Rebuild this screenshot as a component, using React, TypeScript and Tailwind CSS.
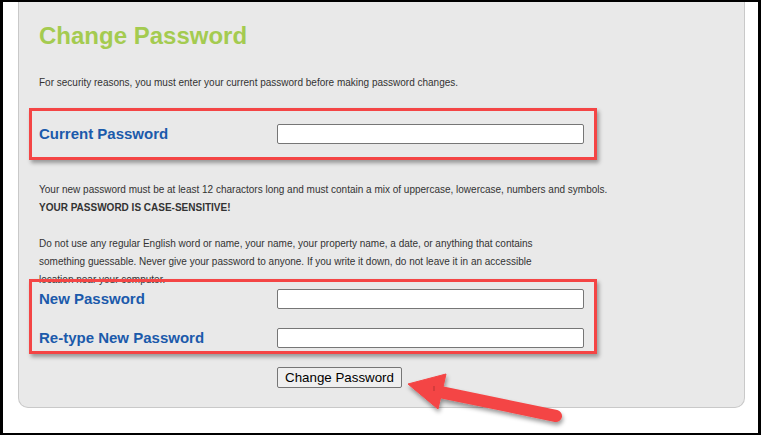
export default function App() {
  return (
    <div className="relative w-[761px] h-[435px] bg-black px-[3px] py-[2px] font-['Liberation_Sans',Arial,sans-serif]">
      <div className="h-full bg-white">
        <div className="ml-[15px] w-[727px] h-[406px] bg-[#e9e9e9] border border-t-0 border-[#c9c9c9] rounded-b-[10px] pl-[20px] pt-[20px]">
          <h1 className="text-[24px] leading-[28px] font-bold text-[#a4cb50]">Change Password</h1>

          <p className="mt-[24px] text-[10px] leading-[18px] text-[#333]">
            For security reasons, you must enter your current password before making password changes.
          </p>

          <div className="mt-[32px] flex items-center h-[20px]">
            <label className="w-[238px] text-[15px] leading-[20px] font-bold text-[#1b5aab]">Current Password</label>
            <input type="password" className="w-[307px] h-[20px] bg-white border border-[#767676] rounded-[2px]" />
          </div>

          <p className="mt-[37px] text-[10px] leading-[18px] text-[#333]">
            Your new password must be at least 12 charactors long and must contain a mix of uppercase, lowercase, numbers and symbols.
            <br />
            <b>YOUR PASSWORD IS CASE-SENSITIVE!</b>
          </p>

          <p className="mt-[18px] text-[10px] leading-[18px] text-[#333]">
            Do not use any regular English word or name, your name, your property name, a date, or anything that contains
            <br />
            something guessable. Never give your password to anyone. If you write it down, do not leave it in an accessible
            <br />
            location near your computer.
          </p>

          <div className="flex items-center h-[20px]">
            <label className="w-[238px] text-[15px] leading-[20px] font-bold text-[#1b5aab]">New Password</label>
            <input type="password" className="w-[307px] h-[20px] bg-white border border-[#767676] rounded-[2px]" />
          </div>

          <div className="mt-[19px] flex items-center h-[20px]">
            <label className="w-[238px] text-[15px] leading-[20px] font-bold text-[#1b5aab]">Re-type New Password</label>
            <input type="password" className="w-[307px] h-[20px] bg-white border border-[#767676] rounded-[2px]" />
          </div>

          <button className="block mt-[19px] ml-[238px] h-[21px] w-[125px] bg-[#efefef] border border-[#767676] rounded-[2px] text-[13.33px] leading-[19px] text-black">
            Change Password
          </button>
        </div>
      </div>

      {/* annotation highlights */}
      <div className="absolute left-[29px] top-[108px] w-[568px] h-[52px] border-[3px] border-[#f44545] shadow-[2px_3px_4px_rgba(0,0,0,0.35)]" />
      <div className="absolute left-[29px] top-[279px] w-[568px] h-[75px] border-[3px] border-[#f44545] shadow-[2px_3px_4px_rgba(0,0,0,0.35)]" />

      <svg className="absolute inset-0 pointer-events-none" width="761" height="435" viewBox="0 0 761 435">
        <defs>
          <filter id="arrowShadow" x="-20%" y="-40%" width="140%" height="180%">
            <feDropShadow dx="1" dy="3" stdDeviation="2" floodColor="#000" floodOpacity="0.4" />
          </filter>
        </defs>
        <g fill="#f44545" stroke="#f44545" filter="url(#arrowShadow)">
          <line x1="440" y1="392" x2="556" y2="416" strokeWidth="12" strokeLinecap="round" />
          <polygon points="408,384 446,374 438,409" strokeWidth="1" strokeLinejoin="round" />
        </g>
        <line x1="434" y1="386" x2="434" y2="391" stroke="#b83434" strokeWidth="1" />
      </svg>
    </div>
  );
}
